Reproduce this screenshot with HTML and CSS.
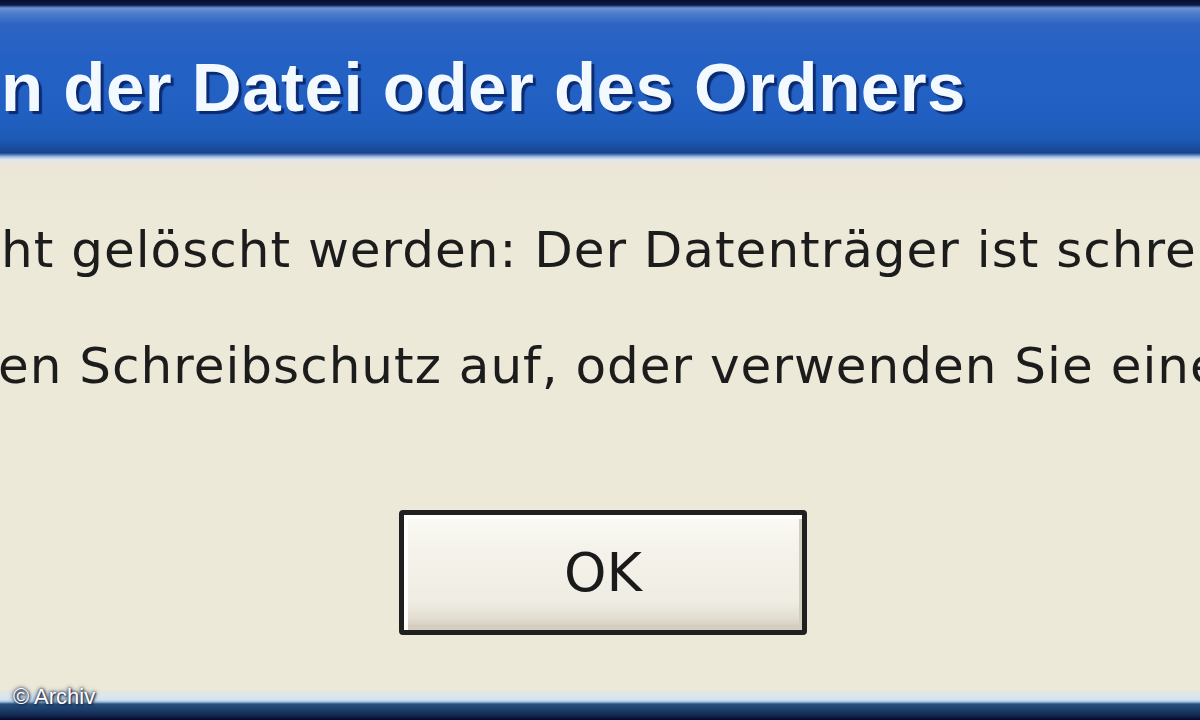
FILE: index.html
```html
<!DOCTYPE html>
<html lang="de">
<head>
<meta charset="utf-8">
<title>Fehler beim Löschen der Datei oder des Ordners</title>
<link rel="stylesheet" href="styles.css">
</head>
<body>
<div class="window">
  <header class="titlebar">
    <h1 class="title">n der Datei oder des Ordners</h1>
  </header>
  <main class="content">
    <p class="msg first">ht gelöscht werden: Der Datenträger ist schreibgeschützt.</p>
    <p class="msg second">en Schreibschutz auf, oder verwenden Sie einen anderen Datenträger.</p>
    <div class="actions">
      <button class="ok" type="button">OK</button>
    </div>
  </main>
  <footer class="frame-bottom"></footer>
  <span class="credit">© Archiv</span>
</div>
</body>
</html>
```

FILE: styles.css
```css
html, body {
  margin: 0;
  padding: 0;
  width: 1200px;
  height: 720px;
  overflow: hidden;
  background: #ece9d8;
}

.window {
  position: relative;
  width: 1200px;
  height: 720px;
  display: flex;
  flex-direction: column;
  overflow: hidden;
}

.titlebar {
  height: 160px;
  flex: none;
  background: linear-gradient(to bottom,
    #08102e 0px, #0c1a48 5px, #6f93d2 8px, #4f7dcc 13px,
    #2d64c4 24px, #2461c4 60px, #2160c2 110px, #1e5bb8 138px,
    #1a4c9e 148px, #17448e 153px, #a9c2e2 157px, #e4ecf2 160px);
  padding: 0 0 0 1px;
  box-sizing: border-box;
}

.title {
  margin: 0;
  padding-top: 50px;
  font-family: "Liberation Sans", Arial, sans-serif;
  font-weight: bold;
  font-size: 69px;
  line-height: 76px;
  color: #f2f9ff;
  letter-spacing: 0.5px;
  white-space: nowrap;
  text-shadow: 3px 3px 1px #0b2a70;
}

.content {
  flex: 1;
  background: linear-gradient(to bottom, #e6e8e4 0px, #ece6d6 8px, #ece9d8 40px, #ece9d8 100%);
  display: flex;
  flex-direction: column;
  overflow: hidden;
}

.msg {
  margin: 0;
  font-family: "DejaVu Sans", sans-serif;
  font-size: 50px;
  line-height: 60px;
  letter-spacing: 1px;
  color: #1c1c1c;
  white-space: nowrap;
}

.first {
  margin-top: 60px;
  margin-left: 1px;
}

.second {
  margin-top: 56px;
  margin-left: -2px;
}

.actions {
  display: flex;
  justify-content: center;
  margin-top: 114px;
}

.ok {
  width: 408px;
  height: 125px;
  margin-left: 6px;
  border: 5px solid #202020;
  border-radius: 4px;
  background: linear-gradient(to bottom, #fbfaf6 0%, #f4f2ea 30%, #efede3 75%, #e2ddd0 90%, #cfc9b8 100%);
  box-shadow: inset 4px 4px 0 #ffffff, inset -3px -5px 0 #d4cebe;
  font-family: "DejaVu Sans", sans-serif;
  font-size: 54px;
  color: #1a1a1a;
  padding: 0;
}

.frame-bottom {
  height: 30px;
  flex: none;
  background: linear-gradient(to bottom,
    #e8e6d8 0px, #dbe6ee 6px, #cfe2f2 10px, #9dbad8 12px,
    #25507e 14px, #1c3d68 20px, #122a52 25px, #05082a 30px);
}

.credit {
  position: absolute;
  left: 13px;
  bottom: 11px;
  font-family: "Liberation Sans", Arial, sans-serif;
  font-size: 22px;
  line-height: 24px;
  color: #ffffff;
  text-shadow: 0 0 3px #1a2a48, 1px 1px 2px #1a2a48, 0 0 5px #2a3a58;
}
```
